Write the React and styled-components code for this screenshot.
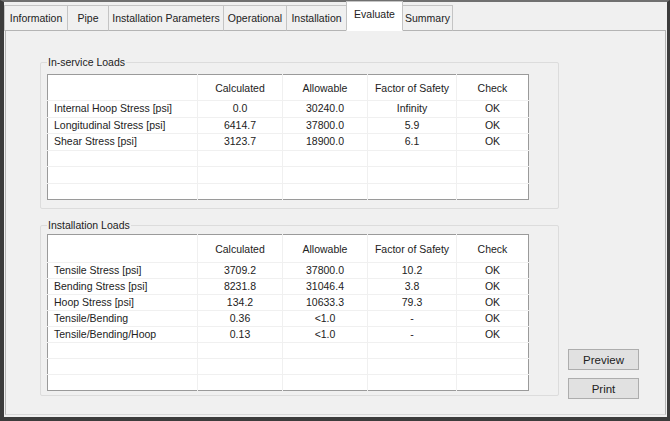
import React from 'react'
import styled, { createGlobalStyle } from 'styled-components'

const GlobalStyle = createGlobalStyle`
  html, body {
    margin: 0;
    padding: 0;
    background: #f0f0f0;
  }
  body {
    font-family: "Liberation Sans", Arial, sans-serif;
    font-size: 10.5px;
    color: #1e1e1e;
  }
`

const tabs = [
  { label: 'Information', width: 63 },
  { label: 'Pipe', width: 41 },
  { label: 'Installation Parameters', width: 115 },
  { label: 'Operational', width: 63 },
  { label: 'Installation', width: 60 },
  { label: 'Evaluate', width: 56, active: true },
  { label: 'Summary', width: 50 },
]

const columns = ['', 'Calculated', 'Allowable', 'Factor of Safety', 'Check']
const colWidths = [150, 85, 85, 89, 72]

const inServiceRows = [
  ['Internal Hoop Stress [psi]', '0.0', '30240.0', 'Infinity', 'OK'],
  ['Longitudinal Stress [psi]', '6414.7', '37800.0', '5.9', 'OK'],
  ['Shear Stress [psi]', '3123.7', '18900.0', '6.1', 'OK'],
]

const installationRows = [
  ['Tensile Stress [psi]', '3709.2', '37800.0', '10.2', 'OK'],
  ['Bending Stress [psi]', '8231.8', '31046.4', '3.8', 'OK'],
  ['Hoop Stress [psi]', '134.2', '10633.3', '79.3', 'OK'],
  ['Tensile/Bending', '0.36', '<1.0', '-', 'OK'],
  ['Tensile/Bending/Hoop', '0.13', '<1.0', '-', 'OK'],
]

function LoadsTable({ rows, emptyRows, headerHeight, rowHeight }) {
  const blanks = Array.from({ length: emptyRows }, () => ['', '', '', '', ''])
  return (
    <Grid>
      <colgroup>
        {colWidths.map((w, i) => <col key={i} style={{ width: w }} />)}
      </colgroup>
      <thead>
        <tr>
          {columns.map((c, i) => (
            <HeadCell key={i} $h={headerHeight}>{c}</HeadCell>
          ))}
        </tr>
      </thead>
      <tbody>
        {[...rows, ...blanks].map((r, ri) => (
          <tr key={ri}>
            {r.map((v, ci) => (
              <Cell key={ci} $h={rowHeight} $label={ci === 0}>{v}</Cell>
            ))}
          </tr>
        ))}
      </tbody>
    </Grid>
  )
}

function App() {
  return (
    <>
      <GlobalStyle />
      <Window>
        <TabStrip>
          {tabs.map(t => (
            <Tab key={t.label} $active={t.active} $w={t.width}>{t.label}</Tab>
          ))}
        </TabStrip>
        <Panel>
          <Groups>
            <GroupBox $pt={5} $pb={8}>
              <Legend>In-service Loads</Legend>
              <LoadsTable rows={inServiceRows} emptyRows={3} headerHeight={25} rowHeight={16.5} />
            </GroupBox>
            <GroupBox $pt={2} $pb={4}>
              <Legend>Installation Loads</Legend>
              <LoadsTable rows={installationRows} emptyRows={3} headerHeight={27} rowHeight={16} />
            </GroupBox>
          </Groups>
          <Buttons>
            <Button>Preview</Button>
            <Button>Print</Button>
          </Buttons>
        </Panel>
      </Window>
    </>
  )
}

const Window = styled.div`
  width: 670px;
  height: 421px;
  box-sizing: border-box;
  display: flex;
  flex-direction: column;
  background: #f0f0f0;
  border-left: 4px solid #3c3c3c;
  border-right: 3px solid #3c3c3c;
  border-bottom: 4px solid #3c3c3c;
  border-top: 2px solid #707070;
`

const TabStrip = styled.div`
  display: flex;
  align-items: flex-end;
  height: 29px;
  position: relative;
  z-index: 1;
  margin-bottom: -1px;
`

const Tab = styled.div`
  box-sizing: border-box;
  width: ${p => p.$w + 1}px;
  height: ${p => (p.$active ? 30 : 26)}px;
  margin-right: -1px;
  display: flex;
  align-items: center;
  justify-content: center;
  padding-bottom: ${p => (p.$active ? 4 : 0)}px;
  background: ${p => (p.$active ? '#ffffff' : '#f0f0f0')};
  border: 1px solid #c4c4c4;
  border-bottom: ${p => (p.$active ? '1px solid #ffffff' : '1px solid #b4b4b4')};
  white-space: nowrap;
  color: #222;
  position: relative;
  z-index: ${p => (p.$active ? 2 : 0)};
`

const Panel = styled.div`
  flex: 1;
  display: flex;
  align-items: flex-end;
  margin: 0 1px 2px 1px;
  padding: 25px 0 15px 34px;
  background: #f0f0f0;
  border: 1px solid #b4b4b4;
  border-bottom-color: #d8d8d8;
`

const Groups = styled.div`
  display: flex;
  flex-direction: column;
  gap: 10px;
  align-self: flex-start;
  width: 519px;
`

const GroupBox = styled.fieldset`
  margin: 0;
  padding: ${p => p.$pt}px 29px ${p => p.$pb}px 6px;
  border: 1px solid #dcdcdc;
  border-radius: 2px;
  min-width: 0;
`

const Legend = styled.legend`
  padding: 0 1px;
  margin-left: 0;
  font-size: 10.5px;
  line-height: 13px;
  color: #222;
`

const Grid = styled.table`
  border-collapse: collapse;
  table-layout: fixed;
  width: 482px;
  background: #ffffff;
  border: 1px solid #9a9a9a;
`

const HeadCell = styled.th`
  height: ${p => p.$h}px;
  padding: 0;
  font-weight: normal;
  text-align: center;
  vertical-align: middle;
  border-left: 1px solid #f0f0f0;
  border-bottom: 1px solid #f0f0f0;
  color: #222;
  &:first-child {
    border-left: none;
  }
`

const Cell = styled.td`
  box-sizing: border-box;
  height: ${p => p.$h}px;
  padding: ${p => (p.$label ? '0 0 0 6px' : '0')};
  line-height: 13px;
  text-align: ${p => (p.$label ? 'left' : 'center')};
  white-space: nowrap;
  overflow: hidden;
  border-left: 1px solid #f0f0f0;
  border-bottom: 1px solid #f0f0f0;
  color: #222;
  &:first-child {
    border-left: none;
  }
  tr:last-child > & {
    border-bottom: none;
  }
`

const Buttons = styled.div`
  display: flex;
  flex-direction: column;
  gap: 8px;
  margin-left: 9px;
`

const Button = styled.button`
  width: 71px;
  height: 21px;
  padding: 0;
  font-family: inherit;
  font-size: 11.5px;
  color: #222;
  background: #e1e1e1;
  border: 1px solid #adadad;
  border-radius: 0;
`

export default App
